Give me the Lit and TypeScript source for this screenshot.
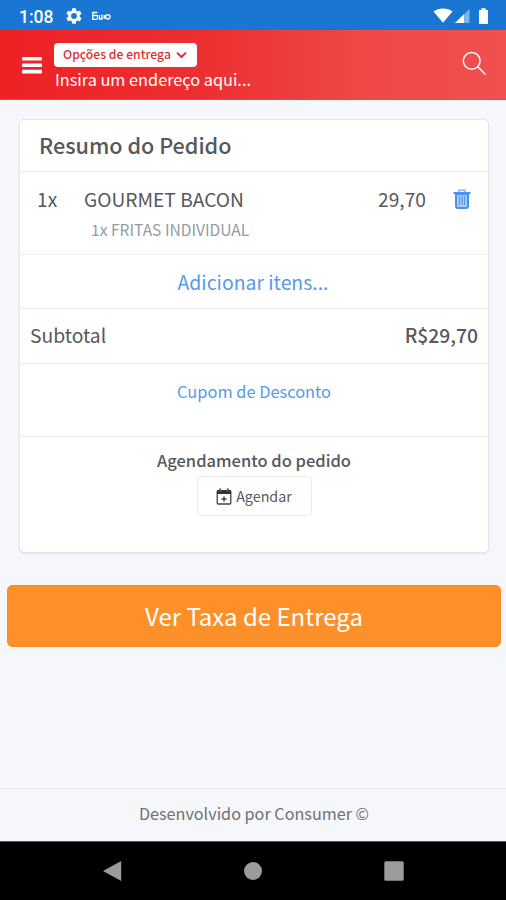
import { LitElement, html, css } from "lit";
import { customElement } from "lit/decorators.js";

@customElement("app-root")
export class AppRoot extends LitElement {
  static styles = css`
    :host {
      display: flex;
      flex-direction: column;
      height: 900px;
      width: 506px;
      overflow: hidden;
      box-sizing: border-box;
      background: #f5f7fb;
      color: #56585b;
      font-family: "Noto Sans CJK SC", "Noto Sans", sans-serif;
      white-space: nowrap;
    }
    * { box-sizing: border-box; }
    svg { display: block; flex: none; }
    button { font: inherit; color: inherit; border: 0; padding: 0; margin: 0; }
    .status {
      height: 30px;
      background: #1976d2;
      display: flex;
      align-items: center;
      color: #fff;
      padding: 1px 15px 0 19px;
      flex: none;
    }
    .time { font: 500 17.5px/28px Roboto, sans-serif; width: 47px; padding-top: 2px; }
    .gear { margin-right: 10px; }
    .radio { margin-left: auto; }
    .top {
      height: 70px;
      flex: none;
      background: linear-gradient(90deg, #ee2125 0%, #ed2f31 40%, #f04848 72%, #f05050 100%);
      border-bottom: 1px solid #e44;
      color: #fff;
      display: flex;
      padding: 13px 20px 0 22px;
    }
    .menu { margin: 14px 12px 0 0; }
    .address { flex: 1; }
    .options {
      display: flex;
      align-items: center;
      width: 143px;
      height: 24px;
      padding-left: 9px;
      border-radius: 4px;
      background: #fff;
      color: #d9303a;
      font-size: 12.2px;
      font-weight: 500;
      line-height: 22px;
    }
    .options span { width: 113px; height: 24px; }
    .place { font-size: 16.3px; line-height: 24px; padding-left: 1px; }
    .search { margin-top: 8px; }
    .card {
      margin: 19px 17px 0 19px;
      height: 434px;
      flex: none;
      background: #fff;
      border: 1px solid #e3e6ea;
      border-radius: 5px;
      box-shadow: 0 1px 2px rgba(0, 0, 0, 0.08);
    }
    .row { border-bottom: 1px solid #eceef0; }
    .heading { height: 52px; padding-left: 19px; font-size: 21.6px; line-height: 49px; font-weight: 500; margin: 0; }
    .item { height: 83px; padding: 12px 17px 0 17px; }
    .line { display: flex; align-items: center; font-size: 19.2px; line-height: 30px; height: 30px; }
    .qty { width: 47px; }
    .price { margin-left: auto; margin-right: 27px; }
    .extra { padding-left: 54px; font-size: 15.6px; line-height: 30px; color: #939ba2; }
    .link { display: flex; justify-content: center; color: #5799eb; }
    .add { height: 54px; font-size: 19.4px; line-height: 53px; padding-right: 2px; }
    .subtotal { height: 55px; display: flex; justify-content: space-between; padding: 0 10px; font-size: 19.3px; line-height: 53px; }
    .subtotal b { font-weight: 500; }
    .coupon { height: 73px; font-size: 16.4px; line-height: 55px; }
    .schedule { display: flex; flex-direction: column; align-items: center; padding-top: 9px; }
    .schedule h3 { margin: 0; font-size: 16.5px; line-height: 28px; font-weight: 500; }
    .agendar {
      margin-top: 2px;
      width: 115px;
      height: 40px;
      border: 1px solid #e9ebed;
      border-radius: 4px;
      background: #fff;
      display: flex;
      align-items: center;
      justify-content: center;
      gap: 4px;
      font-size: 14.3px;
      line-height: 38px;
    }
    .cta {
      margin: 32px 5px 0 7px;
      height: 62px;
      flex: none;
      border-radius: 6px;
      background: #fe902a;
      box-shadow: inset 0 0 0 1px #fb8b20;
      color: #fff;
      font-size: 24px;
      line-height: 60px;
    }
    .footer {
      margin-top: auto;
      height: 53px;
      flex: none;
      border-top: 1px solid #e3e6ea;
      font-size: 16.2px;
      line-height: 49px;
      text-align: center;
      padding-left: 2px;
      color: #6f7174;
    }
    .nav {
      height: 59px;
      flex: none;
      background: #000;
      border-top: 1px solid #555;
      display: flex;
      align-items: center;
      justify-content: space-between;
      padding: 0 102px;
    }
  `;

  render() {
    return html`
      <div class="status">
        <span class="time">1:08</span>
        <svg class="gear" width="16" height="16" viewBox="2 2 20 20" fill="#fff">
          <path d="M19.14 12.94c.04-.3.06-.61.06-.94s-.02-.64-.07-.94l2.03-1.58c.18-.14.23-.41.12-.61l-1.92-3.32c-.12-.22-.37-.29-.59-.22l-2.39.96c-.5-.38-1.03-.7-1.62-.94l-.36-2.54c-.04-.24-.24-.41-.48-.41h-3.84c-.24 0-.43.17-.47.41l-.36 2.54c-.59.24-1.13.57-1.62.94l-2.39-.96c-.22-.08-.47 0-.59.22L2.74 8.87c-.12.21-.08.47.12.61l2.03 1.58c-.05.3-.09.63-.09.94s.02.64.07.94l-2.03 1.58c-.18.14-.23.41-.12.61l1.92 3.32c.12.22.37.29.59.22l2.39-.96c.5.38 1.03.7 1.62.94l.36 2.54c.05.24.24.41.48.41h3.84c.24 0 .44-.17.47-.41l.36-2.54c.59-.24 1.13-.56 1.62-.94l2.39.96c.22.08.47 0 .59-.22l1.92-3.32c.12-.22.07-.47-.12-.61l-2.01-1.58zM12 15.6A3.6 3.6 0 1 1 12 8.4a3.6 3.6 0 0 1 0 7.2z"/>
        </svg>
        <svg width="19" height="10" viewBox="0 0 19 10" fill="none" stroke="#fff" stroke-width="1.3">
          <path d="M.8 1v7.4h4M1 1.5h4.5M1 4.5h4M5.5 4v4.2M7.5 4v4h2.5V3.5M12.2 4v4M12.2 5h1.6"/>
          <circle cx="15.8" cy="5.8" r="2.2"/>
        </svg>
        <svg class="radio" width="58" height="18" viewBox="0 0 58 18" fill="#fff">
          <path d="M0.5 4.5C5.5.4 14.5.4 19.5 4.5L10 15.8z"/>
          <path d="M22 16 L36.5 2 V16z" opacity=".45"/>
          <path d="M22 16 L31 7.3 V16z"/>
          <path d="M46 3h2.3V1.2h4.4V3H55v14h-9z"/>
        </svg>
      </div>

      <div class="top">
        <svg class="menu" width="20" height="18" viewBox="0 0 20 18" fill="#fff">
          <rect y="0" width="20" height="3.6" rx="1"/>
          <rect y="6.4" width="20" height="3.6" rx="1"/>
          <rect y="12.8" width="20" height="3.6" rx="1"/>
        </svg>
        <div class="address">
          <div class="options">
            <span>Opções de entrega</span>
            <svg width="11" height="8" viewBox="0 0 11 8" fill="none" stroke="#d9303a" stroke-width="2"><path d="M1 1.6 5.5 6 10 1.6"/></svg>
          </div>
          <div class="place">Insira um endereço aqui...</div>
        </div>
        <svg class="search" width="24" height="25" viewBox="0 0 24 25" fill="none" stroke="#fff" stroke-width="1.5" stroke-linecap="round">
          <circle cx="9.7" cy="9.8" r="8.4"/><path d="M15.8 15.8 23 23"/>
        </svg>
      </div>

      <div class="card">
        <h2 class="row heading">Resumo do Pedido</h2>
        <div class="row item">
          <div class="line">
            <span class="qty">1x</span><span class="name">GOURMET BACON</span>
            <span class="price">29,70</span>
            <svg width="18" height="20" viewBox="0 0 18 20" fill="none" stroke="#4a90ec">
              <path d="M3 5h12v12q0 2-2 2H5q-2 0-2-2z" fill="#a9cbf8" stroke-width="2"/>
              <path d="M.5 4h17" stroke-width="2"/>
              <path d="M6 3V1.2h6V3" stroke="#84b3f4" stroke-width="1.6"/>
              <path d="M6.7 7v9M9.2 7v9M11.6 7v9" stroke-width="1"/>
            </svg>
          </div>
          <div class="extra">1x FRITAS INDIVIDUAL</div>
        </div>
        <div class="row link add"><span>Adicionar itens...</span></div>
        <div class="row subtotal"><span>Subtotal</span><b>R$29,70</b></div>
        <div class="row link coupon"><span>Cupom de Desconto</span></div>
        <div class="schedule">
          <h3>Agendamento do pedido</h3>
          <button class="agendar">
            <svg width="16" height="17" viewBox="0 0 16 17" fill="none" stroke="#444">
              <path d="M1.2 3v12q0 1 1 1h11.6q1 0 1-1V3" stroke-width="1.3"/>
              <path d="M1 2h2.2V.4h2V2h5.6V.4h2V2H15v4H1z" fill="#333" stroke="none"/>
              <path d="M4.2 1.2v2.2M11.8 1.2v2.2" stroke="#bbb" stroke-width=".8"/>
              <path d="M8 8.4v5M5.5 10.9h5" stroke-width="1.5"/>
            </svg>
            <span>Agendar</span>
          </button>
        </div>
      </div>

      <button class="cta">Ver Taxa de Entrega</button>

      <div class="footer">Desenvolvido por Consumer ©</div>
      <div class="nav">
        <svg width="20" height="22" viewBox="0 0 20 22" fill="#9b9b9b"><path d="M1 11 19.2 1v20z"/></svg>
        <svg width="18" height="18" viewBox="0 0 18 18" fill="#9b9b9b"><circle cx="9" cy="9" r="9"/></svg>
        <svg width="20" height="20" viewBox="0 0 20 20" fill="#9b9b9b"><rect x=".3" y=".3" width="19.4" height="19.4" rx="1.5"/></svg>
      </div>
    `;
  }
}
